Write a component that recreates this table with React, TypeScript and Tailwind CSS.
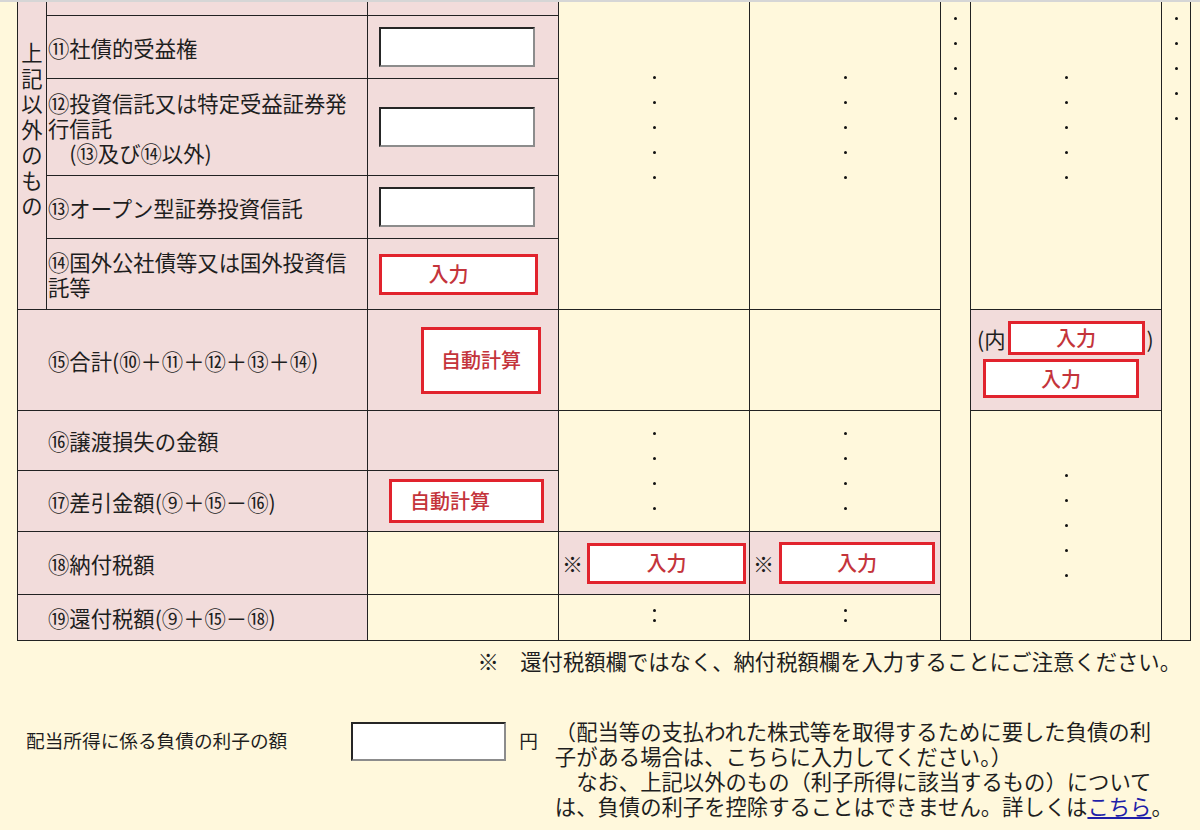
import React from "react";

// colours taken from the form: pink input cells, cornsilk background
const pink = "bg-[#f2dcdb]";
const cream = "bg-[#fff8dc]";
const IDEO_SPACE = "\u3000";

const Dots = ({ count }: { count: number }) => (
  <div className="flex flex-col items-center">
    {Array.from({ length: count }).map((_, i) => (
      <div key={i} className="h-[25px] flex items-center">
        <span className="block w-[3px] h-[3px] rounded-full bg-[#111]" />
      </div>
    ))}
  </div>
);

const Colon = () => (
  <div className="flex flex-col items-center gap-[7px] -mt-[5px]">
    <span className="block w-[3px] h-[3px] rounded-full bg-[#111]" />
    <span className="block w-[3px] h-[3px] rounded-full bg-[#111]" />
  </div>
);

const RedBox = ({
  className,
  children,
}: {
  className: string;
  children: React.ReactNode;
}) => (
  <div
    className={
      "flex items-center bg-white border-[3px] border-[#e1232d] text-[#c4343b] text-[20px] leading-none font-medium " +
      className
    }
  >
    {children}
  </div>
);

const TextBox = ({ className }: { className: string }) => (
  <input
    type="text"
    className={
      "bg-white border-2 border-t-[#262626] border-l-[#262626] border-r-[#8c8c8c] border-b-[#8c8c8c] outline-none " +
      className
    }
  />
);

const App = () => {
  return (
    <div className="min-h-screen w-[1200px] bg-[#fff8dc] text-[#1e1e1e] font-['Noto_Sans_CJK_JP','Noto_Sans',sans-serif]">
      <div className="h-[2px] bg-[#d6d6d6]" />

      {/* ================= TABLE ================= */}
      <div className="ml-[17px] w-[1174px] grid grid-cols-[28px_320px_190px_190px_190px_29px_190px_28px] grid-rows-[13px_62px_96px_62px_70px_100px_59px_60px_62px_45px] gap-px px-px pb-px bg-[#222] text-[21.33px] leading-[25px]">
        {/* 上記以外のもの */}
        <div className={`col-start-1 row-start-1 row-span-5 ${pink} flex flex-col items-center pt-[37px] leading-[25.5px]`}>
          {"上記以外のもの".split("").map((c, i) => (
            <span key={i}>{c}</span>
          ))}
        </div>

        {/* partial row ⑩ */}
        <div className={`col-start-2 row-start-1 ${pink}`} />
        <div className={`col-start-3 row-start-1 ${pink}`} />

        {/* tall dotted cells */}
        <div className={`col-start-4 row-start-1 row-span-5 ${cream} pt-[63px]`}>
          <Dots count={5} />
        </div>
        <div className={`col-start-5 row-start-1 row-span-5 ${cream} pt-[63px]`}>
          <Dots count={5} />
        </div>
        <div className={`col-start-6 row-start-1 row-span-10 ${cream} pt-[4px]`}>
          <Dots count={5} />
        </div>
        <div className={`col-start-7 row-start-1 row-span-5 ${cream} pt-[63px]`}>
          <Dots count={5} />
        </div>
        <div className={`col-start-8 row-start-1 row-span-10 ${cream} pt-[4px]`}>
          <Dots count={5} />
        </div>

        {/* ⑪ */}
        <div className={`col-start-2 row-start-2 ${pink} flex items-center pl-px whitespace-nowrap`}>
          ⑪社債的受益権
        </div>
        <div className={`col-start-3 row-start-2 ${pink} flex items-center pl-[11px]`}>
          <TextBox className="w-[156px] h-[40px]" />
        </div>

        {/* ⑫ */}
        <div className={`col-start-2 row-start-3 ${pink} flex items-center pl-px whitespace-pre`}>
          <div>
            ⑫投資信託又は特定受益証券発
            <br />
            行信託
            <br />
            {IDEO_SPACE + "(⑬及び⑭以外)"}
          </div>
        </div>
        <div className={`col-start-3 row-start-3 ${pink} flex items-center pl-[11px]`}>
          <TextBox className="w-[156px] h-[40px]" />
        </div>

        {/* ⑬ */}
        <div className={`col-start-2 row-start-4 ${pink} flex items-center pl-px whitespace-nowrap`}>
          ⑬オープン型証券投資信託
        </div>
        <div className={`col-start-3 row-start-4 ${pink} flex items-center pl-[11px]`}>
          <TextBox className="w-[156px] h-[40px]" />
        </div>

        {/* ⑭ */}
        <div className={`col-start-2 row-start-5 ${pink} flex items-center pl-px whitespace-nowrap`}>
          <div>
            ⑭国外公社債等又は国外投資信
            <br />
            託等
          </div>
        </div>
        <div className={`col-start-3 row-start-5 ${pink} flex items-center pl-[11px]`}>
          <RedBox className="w-[159px] h-[41px] justify-center pr-[20px]">入力</RedBox>
        </div>

        {/* ⑮ */}
        <div className={`col-start-1 col-span-2 row-start-6 ${pink} flex items-center pl-[30px] whitespace-nowrap`}>
          ⑮合計(⑩＋⑪＋⑫＋⑬＋⑭)
        </div>
        <div className={`col-start-3 row-start-6 ${pink} flex items-center justify-end pr-[17px]`}>
          <RedBox className="w-[120px] h-[67px] justify-center border-4">自動計算</RedBox>
        </div>
        <div className={`col-start-4 row-start-6 ${cream}`} />
        <div className={`col-start-5 row-start-6 ${cream}`} />
        <div className={`col-start-7 row-start-6 ${pink} pt-[11px] pl-[6px]`}>
          <div className="flex items-center">
            <span>(内</span>
            <RedBox className="w-[137px] h-[34px] ml-[2px] justify-center">入力</RedBox>
            <span className="ml-[2px]">)</span>
          </div>
          <RedBox className="w-[156px] h-[39px] ml-[6px] mt-[4px] justify-center">入力</RedBox>
        </div>

        {/* ⑯ */}
        <div className={`col-start-1 col-span-2 row-start-7 ${pink} flex items-center pl-[30px] whitespace-nowrap`}>
          ⑯譲渡損失の金額
        </div>
        <div className={`col-start-3 row-start-7 ${pink}`} />
        <div className={`col-start-4 row-start-7 row-span-2 ${cream} flex items-center justify-center`}>
          <Dots count={4} />
        </div>
        <div className={`col-start-5 row-start-7 row-span-2 ${cream} flex items-center justify-center`}>
          <Dots count={4} />
        </div>
        <div className={`col-start-7 row-start-7 row-span-4 ${cream} flex items-center justify-center`}>
          <Dots count={5} />
        </div>

        {/* ⑰ */}
        <div className={`col-start-1 col-span-2 row-start-8 ${pink} flex items-center pl-[30px] whitespace-nowrap`}>
          ⑰差引金額(⑨＋⑮－⑯)
        </div>
        <div className={`col-start-3 row-start-8 ${pink} flex items-center pl-[21px]`}>
          <RedBox className="w-[155px] h-[44px] pl-[18px]">自動計算</RedBox>
        </div>

        {/* ⑱ */}
        <div className={`col-start-1 col-span-2 row-start-9 ${pink} flex items-center pl-[30px] whitespace-nowrap`}>
          ⑱納付税額
        </div>
        <div className={`col-start-3 row-start-9 ${cream}`} />
        <div className={`col-start-4 row-start-9 ${pink} flex items-center pl-[3px]`}>
          <span className="text-[21px]">※</span>
          <RedBox className="w-[159px] h-[41px] ml-[4px] justify-center">入力</RedBox>
        </div>
        <div className={`col-start-5 row-start-9 ${pink} flex items-center pl-[3px]`}>
          <span className="text-[21px]">※</span>
          <RedBox className="w-[156px] h-[42px] ml-[5px] justify-center">入力</RedBox>
        </div>

        {/* ⑲ */}
        <div className={`col-start-1 col-span-2 row-start-10 ${pink} flex items-center pl-[30px] whitespace-nowrap`}>
          ⑲還付税額(⑨＋⑮－⑱)
        </div>
        <div className={`col-start-3 row-start-10 ${cream}`} />
        <div className={`col-start-4 row-start-10 ${cream} flex items-center justify-center`}>
          <Colon />
        </div>
        <div className={`col-start-5 row-start-10 ${cream} flex items-center justify-center`}>
          <Colon />
        </div>
      </div>

      {/* ================= NOTES ================= */}
      <div className="mt-[7px] pr-[19px] text-right text-[21.33px] leading-[25px] whitespace-nowrap">
        ※　還付税額欄ではなく、納付税額欄を入力することにご注意ください。
      </div>

      <div className="flex items-start mt-[45px] pl-[26px]">
        <div className="mt-[9px] text-[18.67px] leading-[25px] whitespace-nowrap">
          配当所得に係る負債の利子の額
        </div>
        <TextBox className="ml-[64px] mt-[4px] w-[155px] h-[39px]" />
        <div className="ml-[13px] mt-[9px] text-[18.67px] leading-[25px]">円</div>
        <p className="ml-[17px] text-[21.33px] leading-[25px] whitespace-pre">
          （配当等の支払われた株式等を取得するために要した負債の利
          <br />
          子がある場合は、こちらに入力してください。）
          <br />
          {IDEO_SPACE + "なお、上記以外のもの（利子所得に該当するもの）について"}
          <br />
          は、負債の利子を控除することはできません。詳しくは
          <a href="#" className="text-[#1f1fa8] underline">
            こちら
          </a>
          。
        </p>
      </div>
    </div>
  );
};

export default App;
